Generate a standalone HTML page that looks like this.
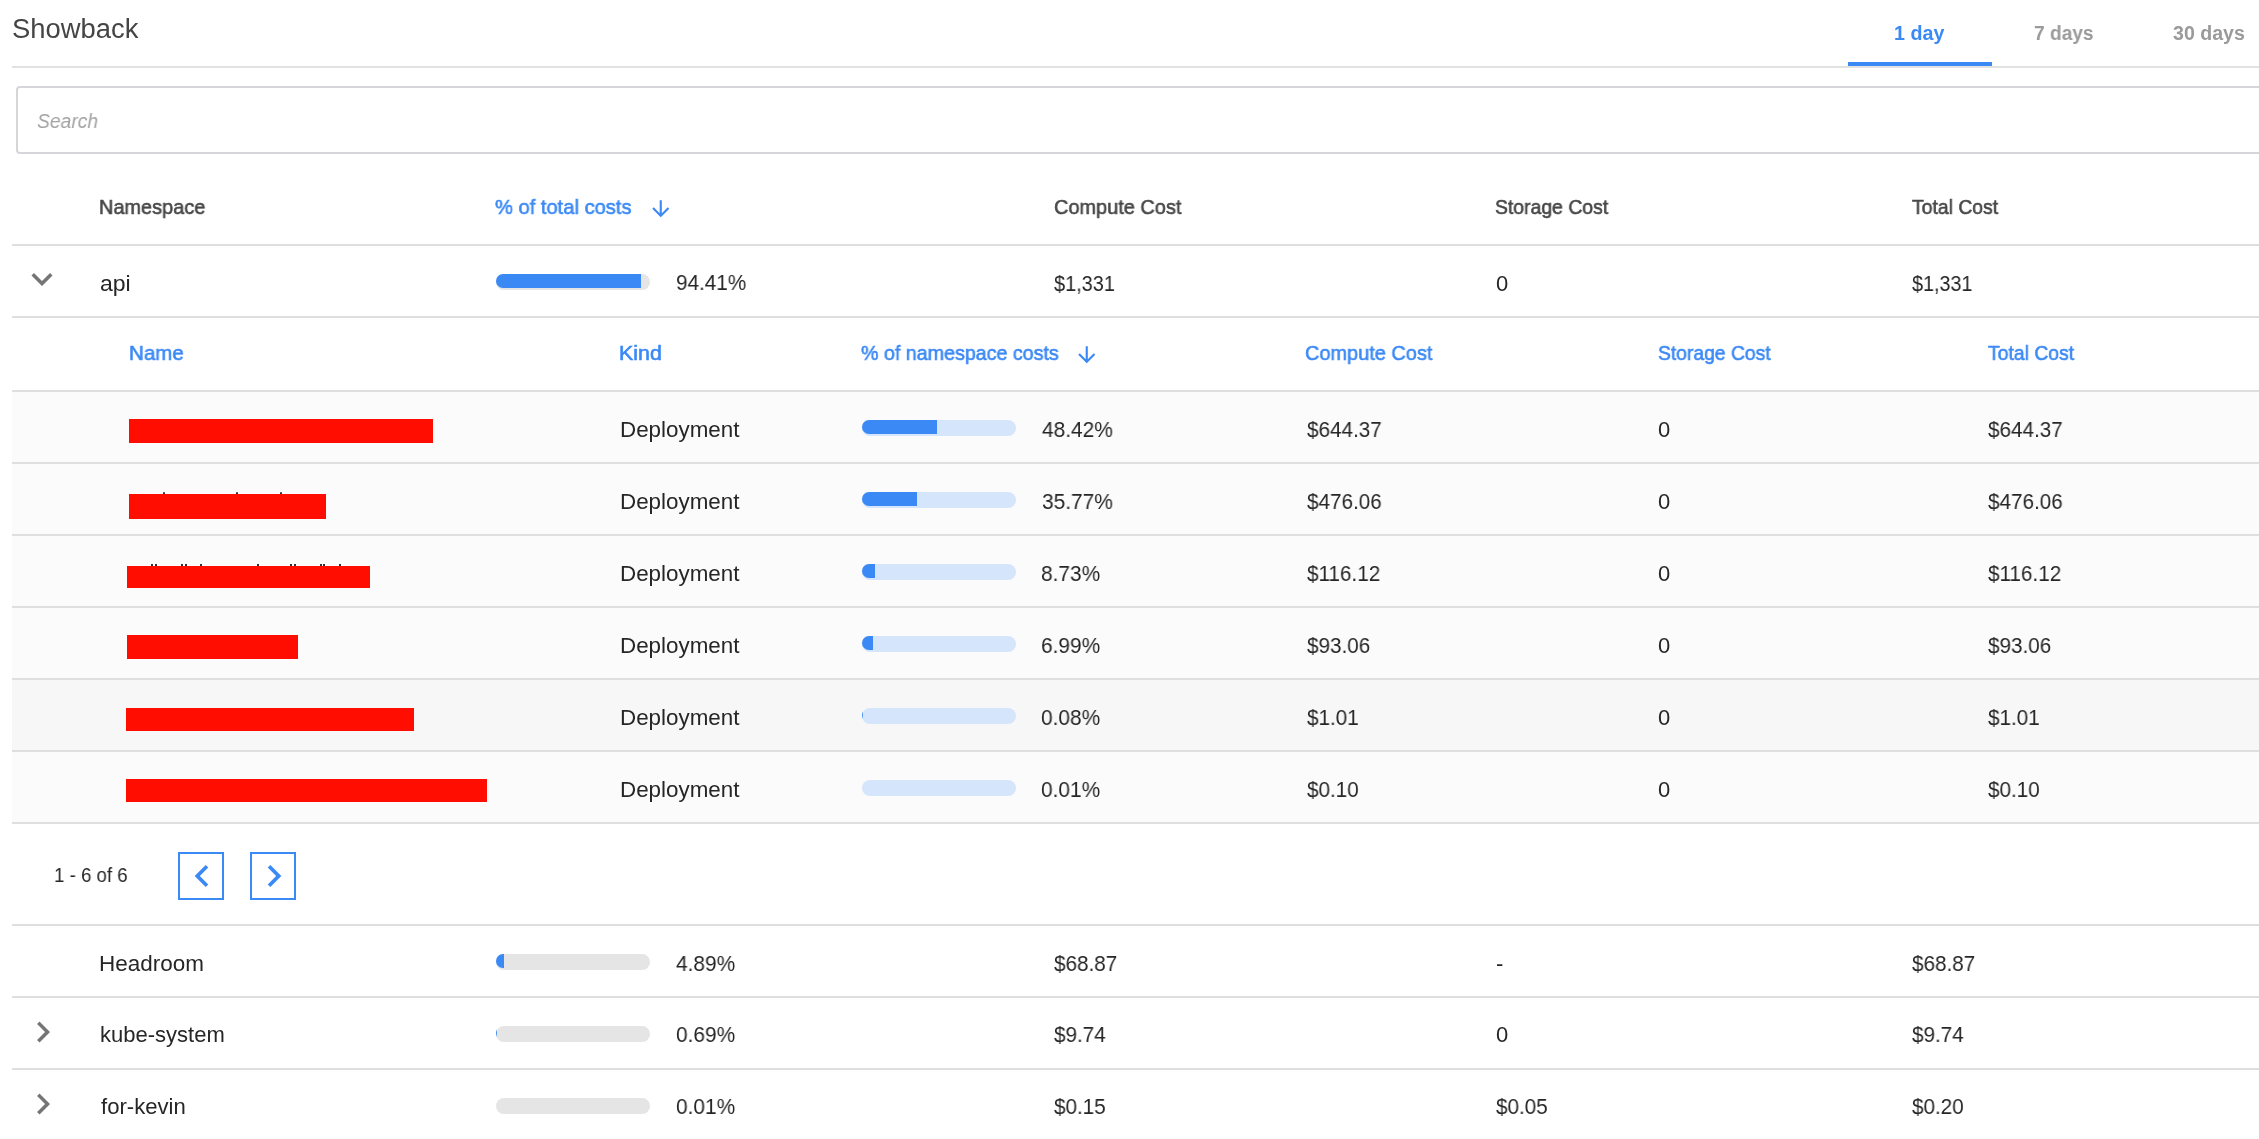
<!DOCTYPE html>
<html><head><meta charset="utf-8"><style>
html,body{margin:0;padding:0;background:#fff;width:2259px;height:1139px;overflow:hidden;position:relative}
body>div,body>svg{position:absolute}
div div{position:absolute}
.t{white-space:pre;font-family:"Liberation Sans",sans-serif;will-change:transform}
</style></head><body>
<div class="t" style="left:11.76px;top:14px;font-size:27px;line-height:30px;font-weight:normal;font-style:normal;color:#454545;letter-spacing:0.000px;transform:scaleX(1.0147);transform-origin:0 0;">Showback</div>
<div class="t" style="left:1893.76px;top:22px;font-size:19.5px;line-height:22px;font-weight:bold;font-style:normal;color:#3b89f5;letter-spacing:0.000px;transform:scaleX(1.0097);transform-origin:0 0;">1 day</div>
<div class="t" style="left:2034.18px;top:22px;font-size:19.5px;line-height:22px;font-weight:bold;font-style:normal;color:#9a9a9a;letter-spacing:0.000px;transform:scaleX(0.9819);transform-origin:0 0;">7 days</div>
<div class="t" style="left:2172.55px;top:22px;font-size:19.5px;line-height:22px;font-weight:bold;font-style:normal;color:#9a9a9a;letter-spacing:0.000px;transform:scaleX(1.0028);transform-origin:0 0;">30 days</div>
<div style="left:12px;top:66px;width:2247px;height:2px;background:#e2e2e2;"></div>
<div style="left:1848px;top:62px;width:144px;height:4px;background:#3b89f5;"></div>
<div style="left:16px;top:86px;width:2300px;height:68px;box-sizing:border-box;border:2px solid #d5d6d9;border-radius:4px;background:#fff"></div>
<div class="t" style="left:36.65px;top:109px;font-size:20.5px;line-height:23px;font-weight:normal;font-style:italic;color:#a3a3a3;letter-spacing:0.000px;transform:scaleX(0.9412);transform-origin:0 0;">Search</div>
<div class="t" style="left:99.17px;top:195px;font-size:21px;line-height:23px;font-weight:normal;font-style:normal;color:#474747;letter-spacing:0.000px;-webkit-text-stroke:0.6px #474747;transform:scaleX(0.9479);transform-origin:0 0;">Namespace</div>
<div class="t" style="left:495.28px;top:195px;font-size:21px;line-height:23px;font-weight:normal;font-style:normal;color:#3b89f5;letter-spacing:0.000px;-webkit-text-stroke:0.6px #3b89f5;transform:scaleX(0.9582);transform-origin:0 0;">% of total costs</div>
<svg style="position:absolute;left:648.15px;top:195.9px;" width="25.5" height="25.5" viewBox="0 0 24 24"><path d="M20 12l-1.41-1.41L13 16.17V4h-2v12.17l-5.58-5.59L4 12l8 8 8-8z" fill="#3b89f5"/></svg>
<div class="t" style="left:1053.59px;top:195px;font-size:21px;line-height:23px;font-weight:normal;font-style:normal;color:#474747;letter-spacing:0.000px;-webkit-text-stroke:0.6px #474747;transform:scaleX(0.9488);transform-origin:0 0;">Compute Cost</div>
<div class="t" style="left:1495.42px;top:195px;font-size:21px;line-height:23px;font-weight:normal;font-style:normal;color:#474747;letter-spacing:0.000px;-webkit-text-stroke:0.6px #474747;transform:scaleX(0.9230);transform-origin:0 0;">Storage Cost</div>
<div class="t" style="left:1912.26px;top:195px;font-size:21px;line-height:23px;font-weight:normal;font-style:normal;color:#474747;letter-spacing:0.000px;-webkit-text-stroke:0.6px #474747;transform:scaleX(0.9224);transform-origin:0 0;">Total Cost</div>
<div style="left:12px;top:244px;width:2247px;height:2px;background:#dfdfdf;"></div>
<div style="left:12px;top:316px;width:2247px;height:2px;background:#dfdfdf;"></div>
<div style="left:12px;top:390px;width:2247px;height:2px;background:#dfdfdf;"></div>
<div style="left:12px;top:462px;width:2247px;height:2px;background:#dfdfdf;"></div>
<div style="left:12px;top:534px;width:2247px;height:2px;background:#dfdfdf;"></div>
<div style="left:12px;top:606px;width:2247px;height:2px;background:#dfdfdf;"></div>
<div style="left:12px;top:678px;width:2247px;height:2px;background:#dfdfdf;"></div>
<div style="left:12px;top:750px;width:2247px;height:2px;background:#dfdfdf;"></div>
<div style="left:12px;top:822px;width:2247px;height:2px;background:#dfdfdf;"></div>
<div style="left:12px;top:924px;width:2247px;height:2px;background:#dfdfdf;"></div>
<div style="left:12px;top:996px;width:2247px;height:2px;background:#dfdfdf;"></div>
<div style="left:12px;top:1068px;width:2247px;height:2px;background:#dfdfdf;"></div>
<div style="left:12px;top:392px;width:2247px;height:70px;background:#fbfbfb;"></div>
<div style="left:12px;top:464px;width:2247px;height:70px;background:#fbfbfb;"></div>
<div style="left:12px;top:536px;width:2247px;height:70px;background:#fbfbfb;"></div>
<div style="left:12px;top:608px;width:2247px;height:70px;background:#fbfbfb;"></div>
<div style="left:12px;top:680px;width:2247px;height:70px;background:#f7f7f7;"></div>
<div style="left:12px;top:752px;width:2247px;height:70px;background:#fbfbfb;"></div>
<svg style="position:absolute;left:21.1px;top:258px;" width="42" height="42" viewBox="0 0 24 24"><path d="M16.59 8.59L12 13.17 7.41 8.59 6 10l6 6 6-6z" fill="#757575"/></svg>
<div class="t" style="left:99.82px;top:271px;font-size:22px;line-height:25px;font-weight:normal;font-style:normal;color:#262626;letter-spacing:0.000px;transform:scaleX(1.0467);transform-origin:0 0;">api</div>
<div style="left:496px;top:274px;width:154px;height:16px;background:#e5e5e5;border-radius:8px;"></div>
<div style="left:496px;top:274px;width:154px;height:14px;border-radius:7px;overflow:hidden"><div style="left:0;top:0;width:145.39px;height:14px;background:#3b89f5"></div></div>
<div class="t" style="left:675.53px;top:270px;font-size:22px;line-height:25px;font-weight:normal;font-style:normal;color:#262626;letter-spacing:0.000px;transform:scaleX(0.9409);transform-origin:0 0;">94.41%</div>
<div class="t" style="left:1054.39px;top:271px;font-size:22px;line-height:25px;font-weight:normal;font-style:normal;color:#262626;letter-spacing:0.000px;transform:scaleX(0.9064);transform-origin:0 0;">$1,331</div>
<div class="t" style="left:1495.64px;top:271px;font-size:22px;line-height:25px;font-weight:normal;font-style:normal;color:#262626;letter-spacing:0.000px;">0</div>
<div class="t" style="left:1912.49px;top:271px;font-size:22px;line-height:25px;font-weight:normal;font-style:normal;color:#262626;letter-spacing:0.000px;transform:scaleX(0.8988);transform-origin:0 0;">$1,331</div>
<div class="t" style="left:129.11px;top:341px;font-size:21px;line-height:23px;font-weight:normal;font-style:normal;color:#3b89f5;letter-spacing:0.000px;-webkit-text-stroke:0.6px #3b89f5;transform:scaleX(0.9782);transform-origin:0 0;">Name</div>
<div class="t" style="left:619.04px;top:341px;font-size:21px;line-height:23px;font-weight:normal;font-style:normal;color:#3b89f5;letter-spacing:0.000px;-webkit-text-stroke:0.6px #3b89f5;transform:scaleX(1.0191);transform-origin:0 0;">Kind</div>
<div class="t" style="left:861.20px;top:341px;font-size:21px;line-height:23px;font-weight:normal;font-style:normal;color:#3b89f5;letter-spacing:0.000px;-webkit-text-stroke:0.6px #3b89f5;transform:scaleX(0.9358);transform-origin:0 0;">% of namespace costs</div>
<svg style="position:absolute;left:1074.15px;top:341.8px;" width="25.5" height="25.5" viewBox="0 0 24 24"><path d="M20 12l-1.41-1.41L13 16.17V4h-2v12.17l-5.58-5.59L4 12l8 8 8-8z" fill="#3b89f5"/></svg>
<div class="t" style="left:1305.39px;top:341px;font-size:21px;line-height:23px;font-weight:normal;font-style:normal;color:#3b89f5;letter-spacing:0.000px;-webkit-text-stroke:0.6px #3b89f5;transform:scaleX(0.9488);transform-origin:0 0;">Compute Cost</div>
<div class="t" style="left:1657.72px;top:341px;font-size:21px;line-height:23px;font-weight:normal;font-style:normal;color:#3b89f5;letter-spacing:0.000px;-webkit-text-stroke:0.6px #3b89f5;transform:scaleX(0.9188);transform-origin:0 0;">Storage Cost</div>
<div class="t" style="left:1988.16px;top:341px;font-size:21px;line-height:23px;font-weight:normal;font-style:normal;color:#3b89f5;letter-spacing:0.000px;-webkit-text-stroke:0.6px #3b89f5;transform:scaleX(0.9224);transform-origin:0 0;">Total Cost</div>
<div style="left:129px;top:419px;width:304px;height:24px;background:#fe0d00;"></div>
<div class="t" style="left:619.96px;top:417px;font-size:22px;line-height:25px;font-weight:normal;font-style:normal;color:#262626;letter-spacing:0.000px;transform:scaleX(1.0171);transform-origin:0 0;">Deployment</div>
<div style="left:862px;top:420px;width:154px;height:16px;background:#d5e5fc;border-radius:8px;"></div>
<div style="left:862px;top:420px;width:154px;height:14px;border-radius:7px;overflow:hidden"><div style="left:0;top:0;width:74.57px;height:14px;background:#3b89f5"></div></div>
<div class="t" style="left:1041.82px;top:417px;font-size:22px;line-height:25px;font-weight:normal;font-style:normal;color:#262626;letter-spacing:0.000px;transform:scaleX(0.9500);transform-origin:0 0;">48.42%</div>
<div class="t" style="left:1306.68px;top:417px;font-size:22px;line-height:25px;font-weight:normal;font-style:normal;color:#262626;letter-spacing:0.000px;transform:scaleX(0.9400);transform-origin:0 0;">$644.37</div>
<div class="t" style="left:1657.54px;top:417px;font-size:22px;line-height:25px;font-weight:normal;font-style:normal;color:#262626;letter-spacing:0.000px;">0</div>
<div class="t" style="left:1988.38px;top:417px;font-size:22px;line-height:25px;font-weight:normal;font-style:normal;color:#262626;letter-spacing:0.000px;transform:scaleX(0.9400);transform-origin:0 0;">$644.37</div>
<div style="left:129px;top:494px;width:197px;height:25px;background:#fe0d00;"></div>
<div class="t" style="left:619.96px;top:489px;font-size:22px;line-height:25px;font-weight:normal;font-style:normal;color:#262626;letter-spacing:0.000px;transform:scaleX(1.0171);transform-origin:0 0;">Deployment</div>
<div style="left:862px;top:492px;width:154px;height:16px;background:#d5e5fc;border-radius:8px;"></div>
<div style="left:862px;top:492px;width:154px;height:14px;border-radius:7px;overflow:hidden"><div style="left:0;top:0;width:55.09px;height:14px;background:#3b89f5"></div></div>
<div class="t" style="left:1041.50px;top:489px;font-size:22px;line-height:25px;font-weight:normal;font-style:normal;color:#262626;letter-spacing:0.000px;transform:scaleX(0.9500);transform-origin:0 0;">35.77%</div>
<div class="t" style="left:1306.68px;top:489px;font-size:22px;line-height:25px;font-weight:normal;font-style:normal;color:#262626;letter-spacing:0.000px;transform:scaleX(0.9400);transform-origin:0 0;">$476.06</div>
<div class="t" style="left:1657.54px;top:489px;font-size:22px;line-height:25px;font-weight:normal;font-style:normal;color:#262626;letter-spacing:0.000px;">0</div>
<div class="t" style="left:1988.38px;top:489px;font-size:22px;line-height:25px;font-weight:normal;font-style:normal;color:#262626;letter-spacing:0.000px;transform:scaleX(0.9400);transform-origin:0 0;">$476.06</div>
<div style="left:127px;top:566px;width:243px;height:22px;background:#fe0d00;"></div>
<div class="t" style="left:619.96px;top:561px;font-size:22px;line-height:25px;font-weight:normal;font-style:normal;color:#262626;letter-spacing:0.000px;transform:scaleX(1.0171);transform-origin:0 0;">Deployment</div>
<div style="left:862px;top:564px;width:154px;height:16px;background:#d5e5fc;border-radius:8px;"></div>
<div style="left:862px;top:564px;width:154px;height:14px;border-radius:7px;overflow:hidden"><div style="left:0;top:0;width:13.44px;height:14px;background:#3b89f5"></div></div>
<div class="t" style="left:1041.39px;top:561px;font-size:22px;line-height:25px;font-weight:normal;font-style:normal;color:#262626;letter-spacing:0.000px;transform:scaleX(0.9500);transform-origin:0 0;">8.73%</div>
<div class="t" style="left:1306.68px;top:561px;font-size:22px;line-height:25px;font-weight:normal;font-style:normal;color:#262626;letter-spacing:0.000px;transform:scaleX(0.9400);transform-origin:0 0;">$116.12</div>
<div class="t" style="left:1657.54px;top:561px;font-size:22px;line-height:25px;font-weight:normal;font-style:normal;color:#262626;letter-spacing:0.000px;">0</div>
<div class="t" style="left:1988.38px;top:561px;font-size:22px;line-height:25px;font-weight:normal;font-style:normal;color:#262626;letter-spacing:0.000px;transform:scaleX(0.9400);transform-origin:0 0;">$116.12</div>
<div style="left:127px;top:635px;width:171px;height:24px;background:#fe0d00;"></div>
<div class="t" style="left:619.96px;top:633px;font-size:22px;line-height:25px;font-weight:normal;font-style:normal;color:#262626;letter-spacing:0.000px;transform:scaleX(1.0171);transform-origin:0 0;">Deployment</div>
<div style="left:862px;top:636px;width:154px;height:16px;background:#d5e5fc;border-radius:8px;"></div>
<div style="left:862px;top:636px;width:154px;height:14px;border-radius:7px;overflow:hidden"><div style="left:0;top:0;width:10.76px;height:14px;background:#3b89f5"></div></div>
<div class="t" style="left:1041.24px;top:633px;font-size:22px;line-height:25px;font-weight:normal;font-style:normal;color:#262626;letter-spacing:0.000px;transform:scaleX(0.9500);transform-origin:0 0;">6.99%</div>
<div class="t" style="left:1306.68px;top:633px;font-size:22px;line-height:25px;font-weight:normal;font-style:normal;color:#262626;letter-spacing:0.000px;transform:scaleX(0.9400);transform-origin:0 0;">$93.06</div>
<div class="t" style="left:1657.54px;top:633px;font-size:22px;line-height:25px;font-weight:normal;font-style:normal;color:#262626;letter-spacing:0.000px;">0</div>
<div class="t" style="left:1988.38px;top:633px;font-size:22px;line-height:25px;font-weight:normal;font-style:normal;color:#262626;letter-spacing:0.000px;transform:scaleX(0.9400);transform-origin:0 0;">$93.06</div>
<div style="left:126px;top:708px;width:288px;height:23px;background:#fe0d00;"></div>
<div class="t" style="left:619.96px;top:705px;font-size:22px;line-height:25px;font-weight:normal;font-style:normal;color:#262626;letter-spacing:0.000px;transform:scaleX(1.0171);transform-origin:0 0;">Deployment</div>
<div style="left:862px;top:708px;width:154px;height:16px;background:#d5e5fc;border-radius:8px;"></div>
<div style="left:862px;top:708px;width:154px;height:14px;border-radius:7px;overflow:hidden"><div style="left:0;top:0;width:0.12px;height:14px;background:#3b89f5"></div></div>
<div class="t" style="left:1041.48px;top:705px;font-size:22px;line-height:25px;font-weight:normal;font-style:normal;color:#262626;letter-spacing:0.000px;transform:scaleX(0.9500);transform-origin:0 0;">0.08%</div>
<div class="t" style="left:1306.68px;top:705px;font-size:22px;line-height:25px;font-weight:normal;font-style:normal;color:#262626;letter-spacing:0.000px;transform:scaleX(0.9400);transform-origin:0 0;">$1.01</div>
<div class="t" style="left:1657.54px;top:705px;font-size:22px;line-height:25px;font-weight:normal;font-style:normal;color:#262626;letter-spacing:0.000px;">0</div>
<div class="t" style="left:1988.38px;top:705px;font-size:22px;line-height:25px;font-weight:normal;font-style:normal;color:#262626;letter-spacing:0.000px;transform:scaleX(0.9400);transform-origin:0 0;">$1.01</div>
<div style="left:126px;top:779px;width:361px;height:23px;background:#fe0d00;"></div>
<div class="t" style="left:619.96px;top:777px;font-size:22px;line-height:25px;font-weight:normal;font-style:normal;color:#262626;letter-spacing:0.000px;transform:scaleX(1.0171);transform-origin:0 0;">Deployment</div>
<div style="left:862px;top:780px;width:154px;height:16px;background:#d5e5fc;border-radius:8px;"></div>
<div style="left:862px;top:780px;width:154px;height:14px;border-radius:7px;overflow:hidden"><div style="left:0;top:0;width:0.02px;height:14px;background:#3b89f5"></div></div>
<div class="t" style="left:1041.48px;top:777px;font-size:22px;line-height:25px;font-weight:normal;font-style:normal;color:#262626;letter-spacing:0.000px;transform:scaleX(0.9500);transform-origin:0 0;">0.01%</div>
<div class="t" style="left:1306.68px;top:777px;font-size:22px;line-height:25px;font-weight:normal;font-style:normal;color:#262626;letter-spacing:0.000px;transform:scaleX(0.9400);transform-origin:0 0;">$0.10</div>
<div class="t" style="left:1657.54px;top:777px;font-size:22px;line-height:25px;font-weight:normal;font-style:normal;color:#262626;letter-spacing:0.000px;">0</div>
<div class="t" style="left:1988.38px;top:777px;font-size:22px;line-height:25px;font-weight:normal;font-style:normal;color:#262626;letter-spacing:0.000px;transform:scaleX(0.9400);transform-origin:0 0;">$0.10</div>
<div style="left:163px;top:492px;width:2px;height:2px;background:#333;border-radius:1px 1px 0 0;"></div>
<div style="left:236px;top:492px;width:2px;height:2px;background:#333;border-radius:1px 1px 0 0;"></div>
<div style="left:280px;top:492px;width:2px;height:2px;background:#333;border-radius:1px 1px 0 0;"></div>
<div style="left:151px;top:564px;width:2px;height:2px;background:#333;"></div>
<div style="left:155px;top:564px;width:2px;height:2px;background:#333;"></div>
<div style="left:181px;top:564px;width:2px;height:2px;background:#333;"></div>
<div style="left:185px;top:564px;width:2px;height:2px;background:#333;"></div>
<div style="left:200px;top:564px;width:2px;height:2px;background:#333;"></div>
<div style="left:257px;top:564px;width:2px;height:2px;background:#333;"></div>
<div style="left:290px;top:564px;width:2px;height:2px;background:#333;"></div>
<div style="left:294px;top:564px;width:2px;height:2px;background:#333;"></div>
<div style="left:320px;top:564px;width:2px;height:2px;background:#333;"></div>
<div style="left:323px;top:564px;width:2px;height:2px;background:#333;"></div>
<div style="left:339px;top:564px;width:2px;height:2px;background:#333;"></div>
<div class="t" style="left:54.38px;top:864px;font-size:20px;line-height:22px;font-weight:normal;font-style:normal;color:#262626;letter-spacing:0.000px;transform:scaleX(0.9329);transform-origin:0 0;">1 - 6 of 6</div>
<div style="left:178px;top:852px;width:46px;height:48px;box-sizing:border-box;border:2px solid #3b89f5"></div>
<div style="left:250px;top:852px;width:46px;height:48px;box-sizing:border-box;border:2px solid #3b89f5"></div>
<svg style="position:absolute;left:180.2px;top:854px;" width="44" height="44" viewBox="0 0 24 24"><path d="M15.41 7.41L14 6l-6 6 6 6 1.41-1.41L10.83 12z" fill="#3b89f5"/></svg>
<svg style="position:absolute;left:252px;top:854px;" width="44" height="44" viewBox="0 0 24 24"><path d="M10 6L8.59 7.41 13.17 12l-4.58 4.59L10 18l6-6z" fill="#3b89f5"/></svg>
<div class="t" style="left:99.16px;top:951px;font-size:22px;line-height:25px;font-weight:normal;font-style:normal;color:#262626;letter-spacing:0.000px;transform:scaleX(1.0215);transform-origin:0 0;">Headroom</div>
<div style="left:496px;top:954px;width:154px;height:16px;background:#e5e5e5;border-radius:8px;"></div>
<div style="left:496px;top:954px;width:154px;height:14px;border-radius:7px;overflow:hidden"><div style="left:0;top:0;width:7.53px;height:14px;background:#3b89f5"></div></div>
<div class="t" style="left:676.02px;top:951px;font-size:22px;line-height:25px;font-weight:normal;font-style:normal;color:#262626;letter-spacing:0.000px;transform:scaleX(0.9500);transform-origin:0 0;">4.89%</div>
<div class="t" style="left:1054.38px;top:951px;font-size:22px;line-height:25px;font-weight:normal;font-style:normal;color:#262626;letter-spacing:0.000px;transform:scaleX(0.9400);transform-origin:0 0;">$68.87</div>
<div class="t" style="left:1495.52px;top:951px;font-size:22px;line-height:25px;font-weight:normal;font-style:normal;color:#262626;letter-spacing:0.000px;">-</div>
<div class="t" style="left:1912.48px;top:951px;font-size:22px;line-height:25px;font-weight:normal;font-style:normal;color:#262626;letter-spacing:0.000px;transform:scaleX(0.9400);transform-origin:0 0;">$68.87</div>
<svg style="position:absolute;left:21.7px;top:1010.8px;" width="42" height="42" viewBox="0 0 24 24"><path d="M10 6L8.59 7.41 13.17 12l-4.58 4.59L10 18l6-6z" fill="#757575"/></svg>
<div class="t" style="left:99.52px;top:1022px;font-size:22px;line-height:25px;font-weight:normal;font-style:normal;color:#262626;letter-spacing:0.000px;transform:scaleX(1.0002);transform-origin:0 0;">kube-system</div>
<div style="left:496px;top:1026px;width:154px;height:16px;background:#e5e5e5;border-radius:8px;"></div>
<div style="left:496px;top:1026px;width:154px;height:14px;border-radius:7px;overflow:hidden"><div style="left:0;top:0;width:1.06px;height:14px;background:#3b89f5"></div></div>
<div class="t" style="left:675.68px;top:1022px;font-size:22px;line-height:25px;font-weight:normal;font-style:normal;color:#262626;letter-spacing:0.000px;transform:scaleX(0.9500);transform-origin:0 0;">0.69%</div>
<div class="t" style="left:1054.38px;top:1022px;font-size:22px;line-height:25px;font-weight:normal;font-style:normal;color:#262626;letter-spacing:0.000px;transform:scaleX(0.9400);transform-origin:0 0;">$9.74</div>
<div class="t" style="left:1495.64px;top:1022px;font-size:22px;line-height:25px;font-weight:normal;font-style:normal;color:#262626;letter-spacing:0.000px;">0</div>
<div class="t" style="left:1912.48px;top:1022px;font-size:22px;line-height:25px;font-weight:normal;font-style:normal;color:#262626;letter-spacing:0.000px;transform:scaleX(0.9400);transform-origin:0 0;">$9.74</div>
<svg style="position:absolute;left:21.7px;top:1082.8px;" width="42" height="42" viewBox="0 0 24 24"><path d="M10 6L8.59 7.41 13.17 12l-4.58 4.59L10 18l6-6z" fill="#757575"/></svg>
<div class="t" style="left:100.69px;top:1094px;font-size:22px;line-height:25px;font-weight:normal;font-style:normal;color:#262626;letter-spacing:0.000px;transform:scaleX(1.0046);transform-origin:0 0;">for-kevin</div>
<div style="left:496px;top:1098px;width:154px;height:16px;background:#e5e5e5;border-radius:8px;"></div>
<div style="left:496px;top:1098px;width:154px;height:14px;border-radius:7px;overflow:hidden"><div style="left:0;top:0;width:0.02px;height:14px;background:#3b89f5"></div></div>
<div class="t" style="left:675.68px;top:1094px;font-size:22px;line-height:25px;font-weight:normal;font-style:normal;color:#262626;letter-spacing:0.000px;transform:scaleX(0.9500);transform-origin:0 0;">0.01%</div>
<div class="t" style="left:1054.38px;top:1094px;font-size:22px;line-height:25px;font-weight:normal;font-style:normal;color:#262626;letter-spacing:0.000px;transform:scaleX(0.9400);transform-origin:0 0;">$0.15</div>
<div class="t" style="left:1496.28px;top:1094px;font-size:22px;line-height:25px;font-weight:normal;font-style:normal;color:#262626;letter-spacing:0.000px;transform:scaleX(0.9400);transform-origin:0 0;">$0.05</div>
<div class="t" style="left:1912.48px;top:1094px;font-size:22px;line-height:25px;font-weight:normal;font-style:normal;color:#262626;letter-spacing:0.000px;transform:scaleX(0.9400);transform-origin:0 0;">$0.20</div>
</body></html>
